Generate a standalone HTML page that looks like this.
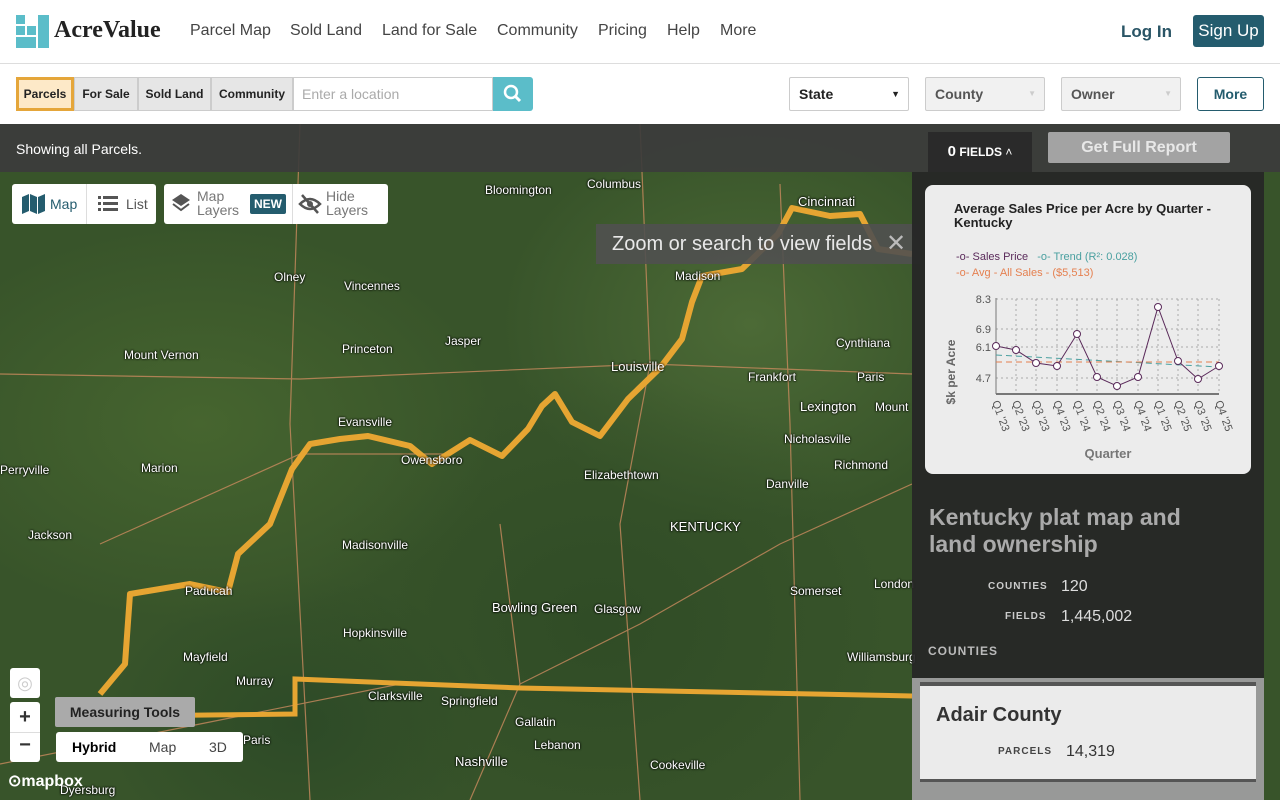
<!DOCTYPE html>
<html><head><meta charset="utf-8"><style>
*{box-sizing:border-box;margin:0;padding:0}
body{width:1280px;height:800px;overflow:hidden;font-family:"Liberation Sans",Arial,sans-serif;position:relative;background:#fff}
.hdr{position:absolute;left:0;top:0;width:1280px;height:64px;background:#fff;border-bottom:1px solid #ddd}
.nav a{position:absolute;top:22px;font-size:16px;color:#444}
.tb{position:absolute;top:64px;left:0;width:1280px;height:60px;background:#fff}
.seg{position:absolute;top:77px;height:34px;font-size:12px;font-weight:bold;color:#222;background:#e6e6e6;border:1px solid #ccc;line-height:32px;text-align:center}
.dd{position:absolute;top:77px;height:34px;width:120px;border:1px solid #ccc;border-radius:2px;font-size:14px;font-weight:bold;line-height:32px;padding-left:9px}
.map{position:absolute;left:0;top:124px;width:1280px;height:676px;background:#38542a;overflow:hidden}
.lbl{position:absolute;color:#fff;font-size:12px;text-shadow:0 0 2px #000,0 0 2px #000;white-space:nowrap}
.bigl{font-size:13px}
.btn{position:absolute;background:#fff;border-radius:3px}
</style></head><body>
<div class="hdr">
 <svg style="position:absolute;left:16px;top:15px" width="33" height="33"><rect x="0" y="0" width="9" height="9" fill="#5bbdc9"/><rect x="22" y="0" width="11" height="33" fill="#5bbdc9"/><rect x="0" y="11" width="9" height="9" fill="#5bbdc9"/><rect x="11" y="11" width="9" height="9" fill="#5bbdc9"/><rect x="0" y="22" width="20" height="11" fill="#5bbdc9"/></svg>
 <div style="position:absolute;left:54px;top:17px;font-family:'Liberation Serif',serif;font-weight:bold;font-size:24px;color:#222">AcreValue</div>
 <div class="nav"><a style="left:190px">Parcel Map</a><a style="left:290px">Sold Land</a><a style="left:382px">Land for Sale</a><a style="left:497px">Community</a><a style="left:598px">Pricing</a><a style="left:667px">Help</a><a style="left:720px">More</a></div>
 <div style="position:absolute;left:1121px;top:22px;font-size:17px;font-weight:bold;color:#2a5566">Log In</div>
 <div style="position:absolute;left:1193px;top:15px;width:71px;height:32px;background:#245c6e;border-radius:3px;color:#fff;font-size:17px;line-height:32px;text-align:center">Sign Up</div>
</div>
<div class="tb"></div>
<div class="seg" style="left:16px;width:58px;background:#fde9c8;border:3px solid #e5a63a;line-height:28px">Parcels</div>
<div class="seg" style="left:74px;width:64px">For Sale</div>
<div class="seg" style="left:138px;width:73px">Sold Land</div>
<div class="seg" style="left:211px;width:82px">Community</div>
<div style="position:absolute;left:293px;top:77px;width:200px;height:34px;border:1px solid #ccc;font-size:14px;color:#aaa;line-height:32px;padding-left:8px">Enter a location</div>
<div style="position:absolute;left:493px;top:77px;width:40px;height:34px;background:#5bbdc9;border-radius:0 3px 3px 0"><svg width="40" height="34"><circle cx="18" cy="15" r="6" stroke="#fff" stroke-width="2.5" fill="none"/><line x1="22" y1="19" x2="27" y2="24" stroke="#fff" stroke-width="3"/></svg></div>
<div class="dd" style="left:789px;color:#222">State<span style="position:absolute;right:8px;top:0;font-size:9px">▼</span></div>
<div class="dd" style="left:925px;background:#f1f1f1;color:#555">County<span style="position:absolute;right:8px;top:0;font-size:8px;color:#ccc">▼</span></div>
<div class="dd" style="left:1061px;background:#f1f1f1;color:#555">Owner<span style="position:absolute;right:8px;top:0;font-size:8px;color:#ccc">▼</span></div>
<div style="position:absolute;left:1197px;top:77px;width:67px;height:34px;border:1px solid #245c6e;border-radius:3px;font-size:14px;font-weight:bold;color:#245c6e;line-height:32px;text-align:center">More</div>

<div class="map">
 <div style="position:absolute;inset:0;background:radial-gradient(ellipse 300px 200px at 200px 300px,#46652f,transparent),radial-gradient(ellipse 300px 250px at 600px 500px,#304c26,transparent),radial-gradient(ellipse 250px 200px at 750px 200px,#4c6a36,transparent),radial-gradient(ellipse 200px 150px at 300px 600px,#2d4a27,transparent)"></div>
 <svg style="position:absolute;left:0;top:0" width="1280" height="676">
  <g stroke="#c98a5e" stroke-width="1.2" fill="none" opacity=".8">
   <path d="M0 250 L300 255 L650 240 L912 250"/><path d="M300 0 L290 300 L310 676"/><path d="M640 0 L650 240 L620 400 L640 676"/><path d="M520 560 L640 500 L780 420 L912 360"/><path d="M100 420 L300 330 L450 330"/><path d="M0 640 L200 600 L400 560"/><path d="M470 676 L520 560 L500 400"/><path d="M780 60 L790 300 L800 676"/>
  </g>
  <path d="M100 570 L125 540 L130 470 L190 460 L228 468 L238 430 L270 400 L292 345 L310 320 L340 315 L368 312 L410 322 L432 340 L470 316 L502 332 L528 305 L542 282 L555 270 L572 298 L600 312 L628 275 L660 244 L682 215 L692 178 L702 152 L742 145 L778 110 L792 84 L830 92 L860 90 L878 125 L912 130" stroke="#e6a532" stroke-width="6" fill="none" stroke-linejoin="round"/>
  <path d="M60 590 L120 592 L295 590 L295 555 L520 564 L912 572" stroke="#e6a532" stroke-width="5" fill="none"/>
 </svg>
 <div class="lbl" style="left:485px;top:59px">Bloomington</div><div class="lbl" style="left:587px;top:53px">Columbus</div><div class="lbl bigl" style="left:798px;top:70px">Cincinnati</div>
 <div class="lbl" style="left:274px;top:146px">Olney</div><div class="lbl" style="left:344px;top:155px">Vincennes</div><div class="lbl" style="left:675px;top:145px">Madison</div>
 <div class="lbl" style="left:124px;top:224px">Mount Vernon</div><div class="lbl" style="left:342px;top:218px">Princeton</div><div class="lbl" style="left:445px;top:210px">Jasper</div><div class="lbl bigl" style="left:611px;top:235px">Louisville</div><div class="lbl" style="left:836px;top:212px">Cynthiana</div>
 <div class="lbl" style="left:748px;top:246px">Frankfort</div><div class="lbl" style="left:857px;top:246px">Paris</div><div class="lbl bigl" style="left:800px;top:275px">Lexington</div><div class="lbl" style="left:875px;top:276px">Mount</div>
 <div class="lbl" style="left:338px;top:291px">Evansville</div><div class="lbl" style="left:401px;top:329px">Owensboro</div><div class="lbl" style="left:784px;top:308px">Nicholasville</div><div class="lbl" style="left:141px;top:337px">Marion</div><div class="lbl" style="left:584px;top:344px">Elizabethtown</div><div class="lbl" style="left:834px;top:334px">Richmond</div>
 <div class="lbl" style="left:0px;top:339px">Perryville</div><div class="lbl" style="left:766px;top:353px">Danville</div><div class="lbl bigl" style="left:670px;top:395px">KENTUCKY</div><div class="lbl" style="left:28px;top:404px">Jackson</div>
 <div class="lbl" style="left:342px;top:414px">Madisonville</div><div class="lbl" style="left:185px;top:460px">Paducah</div><div class="lbl bigl" style="left:492px;top:476px">Bowling Green</div><div class="lbl" style="left:594px;top:478px">Glasgow</div><div class="lbl" style="left:790px;top:460px">Somerset</div><div class="lbl" style="left:874px;top:453px">London</div>
 <div class="lbl" style="left:343px;top:502px">Hopkinsville</div><div class="lbl" style="left:183px;top:526px">Mayfield</div><div class="lbl" style="left:847px;top:526px">Williamsburg</div><div class="lbl" style="left:236px;top:550px">Murray</div><div class="lbl" style="left:368px;top:565px">Clarksville</div><div class="lbl" style="left:441px;top:570px">Springfield</div>
 <div class="lbl" style="left:515px;top:591px">Gallatin</div><div class="lbl" style="left:243px;top:609px">Paris</div><div class="lbl" style="left:534px;top:614px">Lebanon</div><div class="lbl bigl" style="left:455px;top:630px">Nashville</div><div class="lbl" style="left:650px;top:634px">Cookeville</div><div class="lbl" style="left:60px;top:659px">Dyersburg</div>
 <div style="position:absolute;left:0;top:0;width:1280px;height:48px;background:rgba(60,60,60,.92)"></div>
 <div style="position:absolute;left:16px;top:17px;font-size:14px;color:#fff">Showing all Parcels.</div>
 <div style="position:absolute;left:928px;top:8px;width:104px;height:40px;background:#2a2a2a;color:#fff;font-size:12px;line-height:40px;text-align:center"><b style="font-size:15px">0</b> <b>FIELDS</b> ˄</div>
 <div style="position:absolute;left:1048px;top:8px;width:182px;height:31px;background:#a3a3a3;border-radius:2px;color:#e8e8e8;font-size:16px;font-weight:bold;line-height:31px;text-align:center">Get Full Report</div>
 <div class="btn" style="left:12px;top:60px;width:144px;height:40px"></div>
 <div style="position:absolute;left:86px;top:60px;width:1px;height:40px;background:#ddd"></div>
 <svg style="position:absolute;left:22px;top:70px" width="24" height="20"><path d="M0 3 L7 0 L7 17 L0 20Z M8 0 L15 3 L15 20 L8 17Z M16 3 L23 0 L23 17 L16 20Z" fill="#245c6e"/></svg>
 <div style="position:absolute;left:50px;top:72px;font-size:14px;color:#245c6e">Map</div>
 <svg style="position:absolute;left:98px;top:72px" width="20" height="16" fill="#555"><rect x="0" y="0" width="3" height="3"/><rect x="5" y="0" width="15" height="3"/><rect x="0" y="6" width="3" height="3"/><rect x="5" y="6" width="15" height="3"/><rect x="0" y="12" width="3" height="3"/><rect x="5" y="12" width="15" height="3"/></svg>
 <div style="position:absolute;left:126px;top:72px;font-size:14px;color:#555">List</div>
 <div class="btn" style="left:164px;top:60px;width:224px;height:40px"></div>
 <div style="position:absolute;left:292px;top:60px;width:1px;height:40px;background:#ddd"></div>
 <svg style="position:absolute;left:172px;top:70px" width="18" height="20"><path d="M9 0 L18 6 L9 12 L0 6Z" fill="#555"/><path d="M1 10 L9 16 L17 10" stroke="#555" stroke-width="2" fill="none"/></svg>
 <div style="position:absolute;left:197px;top:65px;font-size:14px;color:#777;line-height:14px">Map<br>Layers</div>
 <div style="position:absolute;left:250px;top:70px;width:36px;height:20px;background:#245c6e;color:#fff;font-size:12px;font-weight:bold;line-height:20px;text-align:center;border-radius:2px">NEW</div>
 <svg style="position:absolute;left:298px;top:69px" width="24" height="22"><path d="M2 11 Q12 1 22 11 Q12 21 2 11Z" stroke="#555" stroke-width="2.5" fill="none"/><circle cx="12" cy="11" r="3" fill="#555"/><line x1="4" y1="2" x2="20" y2="20" stroke="#555" stroke-width="2.5"/></svg>
 <div style="position:absolute;left:326px;top:65px;font-size:14px;color:#777;line-height:14px">Hide<br>Layers</div>
 <div style="position:absolute;left:596px;top:100px;width:324px;height:40px;background:rgba(80,80,80,.9);color:#e8e8e8;font-size:20px;line-height:40px;padding-left:16px">Zoom or search to view fields<span style="position:absolute;left:290px;top:0;font-size:24px;color:#bbb">✕</span></div>
 <div class="btn" style="left:10px;top:544px;width:30px;height:30px;text-align:center;line-height:30px;color:#ccc;font-size:18px">◎</div>
 <div class="btn" style="left:10px;top:578px;width:30px;height:60px"></div>
 <div style="position:absolute;left:10px;top:582px;width:30px;text-align:center;font-size:20px;font-weight:bold;color:#333">+</div>
 <div style="position:absolute;left:10px;top:608px;width:30px;height:1px;background:#ddd"></div>
 <div style="position:absolute;left:10px;top:610px;width:30px;text-align:center;font-size:20px;font-weight:bold;color:#333">−</div>
 <div style="position:absolute;left:55px;top:573px;width:140px;height:30px;background:#aaa;border-radius:2px;font-size:14px;font-weight:bold;color:#222;line-height:30px;text-align:center">Measuring Tools</div>
 <div class="btn" style="left:56px;top:608px;width:187px;height:30px;font-size:14px;line-height:30px"><b style="position:absolute;left:16px">Hybrid</b><span style="position:absolute;left:93px;color:#444">Map</span><span style="position:absolute;left:153px;color:#444">3D</span></div>
 <div style="position:absolute;left:8px;top:647px;color:#fff;font-size:16px;font-weight:bold">⊙mapbox</div>
 <div style="position:absolute;left:912px;top:48px;width:352px;height:628px;background:rgba(38,38,38,.93)"></div>
 <div style="position:absolute;left:925px;top:61px;width:326px;height:289px;background:rgba(245,245,245,.96);border-radius:8px"></div>
 <div style="position:absolute;left:954px;top:78px;font-size:13px;font-weight:bold;color:#222;line-height:14px">Average Sales Price per Acre by Quarter -<br>Kentucky</div>
 <div style="position:absolute;left:956px;top:127px;font-size:11px;color:#5a2a5a">-o- Sales Price <span style="color:#4aa0a0;margin-left:6px">-o- Trend (R²: 0.028)</span></div>
 <div style="position:absolute;left:956px;top:143px;font-size:11px;color:#e58050">-o- Avg - All Sales - ($5,513)</div>
 <svg style="position:absolute;left:925px;top:160px" width="326" height="190">
  <g stroke="#aaa" stroke-dasharray="2 3" stroke-width="1">
   <line x1="71" y1="15" x2="294" y2="15"/><line x1="71" y1="45" x2="294" y2="45"/><line x1="71" y1="63" x2="294" y2="63"/><line x1="71" y1="94" x2="294" y2="94"/>
   <line x1="91" y1="15" x2="91" y2="109"/><line x1="111" y1="15" x2="111" y2="109"/><line x1="132" y1="15" x2="132" y2="109"/><line x1="152" y1="15" x2="152" y2="109"/><line x1="172" y1="15" x2="172" y2="109"/><line x1="192" y1="15" x2="192" y2="109"/><line x1="213" y1="15" x2="213" y2="109"/><line x1="233" y1="15" x2="233" y2="109"/><line x1="253" y1="15" x2="253" y2="109"/><line x1="273" y1="15" x2="273" y2="109"/><line x1="294" y1="15" x2="294" y2="109"/>
  </g>
  <line x1="71" y1="14" x2="71" y2="110" stroke="#777"/><line x1="71" y1="110" x2="294" y2="110" stroke="#777" stroke-width="2"/>
  <line x1="71" y1="71" x2="294" y2="83" stroke="#4aa0a0" stroke-dasharray="6 4"/>
  <line x1="71" y1="78" x2="294" y2="78" stroke="#e58050" stroke-dasharray="6 4"/>
  <polyline points="71,62 91,66 111,79 132,82 152,50 172,93 192,102 213,93 233,23 253,77 273,95 294,82" fill="none" stroke="#5a2a5a" stroke-width="1"/>
  <g fill="#fff" stroke="#5a2a5a"><circle cx="71" cy="62" r="3.5"/><circle cx="91" cy="66" r="3.5"/><circle cx="111" cy="79" r="3.5"/><circle cx="132" cy="82" r="3.5"/><circle cx="152" cy="50" r="3.5"/><circle cx="172" cy="93" r="3.5"/><circle cx="192" cy="102" r="3.5"/><circle cx="213" cy="93" r="3.5"/><circle cx="233" cy="23" r="3.5"/><circle cx="253" cy="77" r="3.5"/><circle cx="273" cy="95" r="3.5"/><circle cx="294" cy="82" r="3.5"/></g>
  <g font-size="11" fill="#555" text-anchor="end" font-family="Liberation Sans"><text x="66" y="19">8.3</text><text x="66" y="49">6.9</text><text x="66" y="67">6.1</text><text x="66" y="98">4.7</text></g>
  <text transform="translate(30,88) rotate(-90)" font-size="12" font-weight="bold" fill="#666" font-family="Liberation Sans" text-anchor="middle">$k per Acre</text>
  <g font-size="11" fill="#555" font-family="Liberation Sans">
   <text transform="translate(67,118) rotate(70)">Q1 '23</text><text transform="translate(87,118) rotate(70)">Q2 '23</text><text transform="translate(107,118) rotate(70)">Q3 '23</text><text transform="translate(128,118) rotate(70)">Q4 '23</text><text transform="translate(148,118) rotate(70)">Q1 '24</text><text transform="translate(168,118) rotate(70)">Q2 '24</text><text transform="translate(188,118) rotate(70)">Q3 '24</text><text transform="translate(209,118) rotate(70)">Q4 '24</text><text transform="translate(229,118) rotate(70)">Q1 '25</text><text transform="translate(249,118) rotate(70)">Q2 '25</text><text transform="translate(269,118) rotate(70)">Q3 '25</text><text transform="translate(290,118) rotate(70)">Q4 '25</text>
  </g>
  <text x="183" y="174" font-size="13" font-weight="bold" fill="#777" text-anchor="middle" font-family="Liberation Sans">Quarter</text>
 </svg>
 <div style="position:absolute;left:929px;top:380px;font-size:23px;font-weight:bold;color:#aaa;line-height:27px">Kentucky plat map and<br>land ownership</div>
 <div style="position:absolute;left:988px;top:457px;font-size:10px;font-weight:bold;letter-spacing:1px;color:#ccc">COUNTIES</div>
 <div style="position:absolute;left:1061px;top:454px;font-size:16px;color:#ddd">120</div>
 <div style="position:absolute;left:1005px;top:487px;font-size:10px;font-weight:bold;letter-spacing:1px;color:#ccc">FIELDS</div>
 <div style="position:absolute;left:1061px;top:484px;font-size:16px;color:#ddd">1,445,002</div>
 <div style="position:absolute;left:928px;top:520px;font-size:12px;font-weight:bold;letter-spacing:1px;color:#bbb">COUNTIES</div>
 <div style="position:absolute;left:912px;top:554px;width:352px;height:122px;background:rgba(165,165,165,.9)"></div>
 <div style="position:absolute;left:920px;top:558px;width:336px;height:100px;background:rgba(238,238,238,.96);border-top:4px solid #555;border-bottom:3px solid #555"></div>
 <div style="position:absolute;left:936px;top:580px;font-size:20px;font-weight:bold;color:#333">Adair County</div>
 <div style="position:absolute;left:998px;top:622px;font-size:10px;font-weight:bold;letter-spacing:1px;color:#444">PARCELS</div>
 <div style="position:absolute;left:1066px;top:619px;font-size:16px;color:#333">14,319</div>
</div>
</body></html>
